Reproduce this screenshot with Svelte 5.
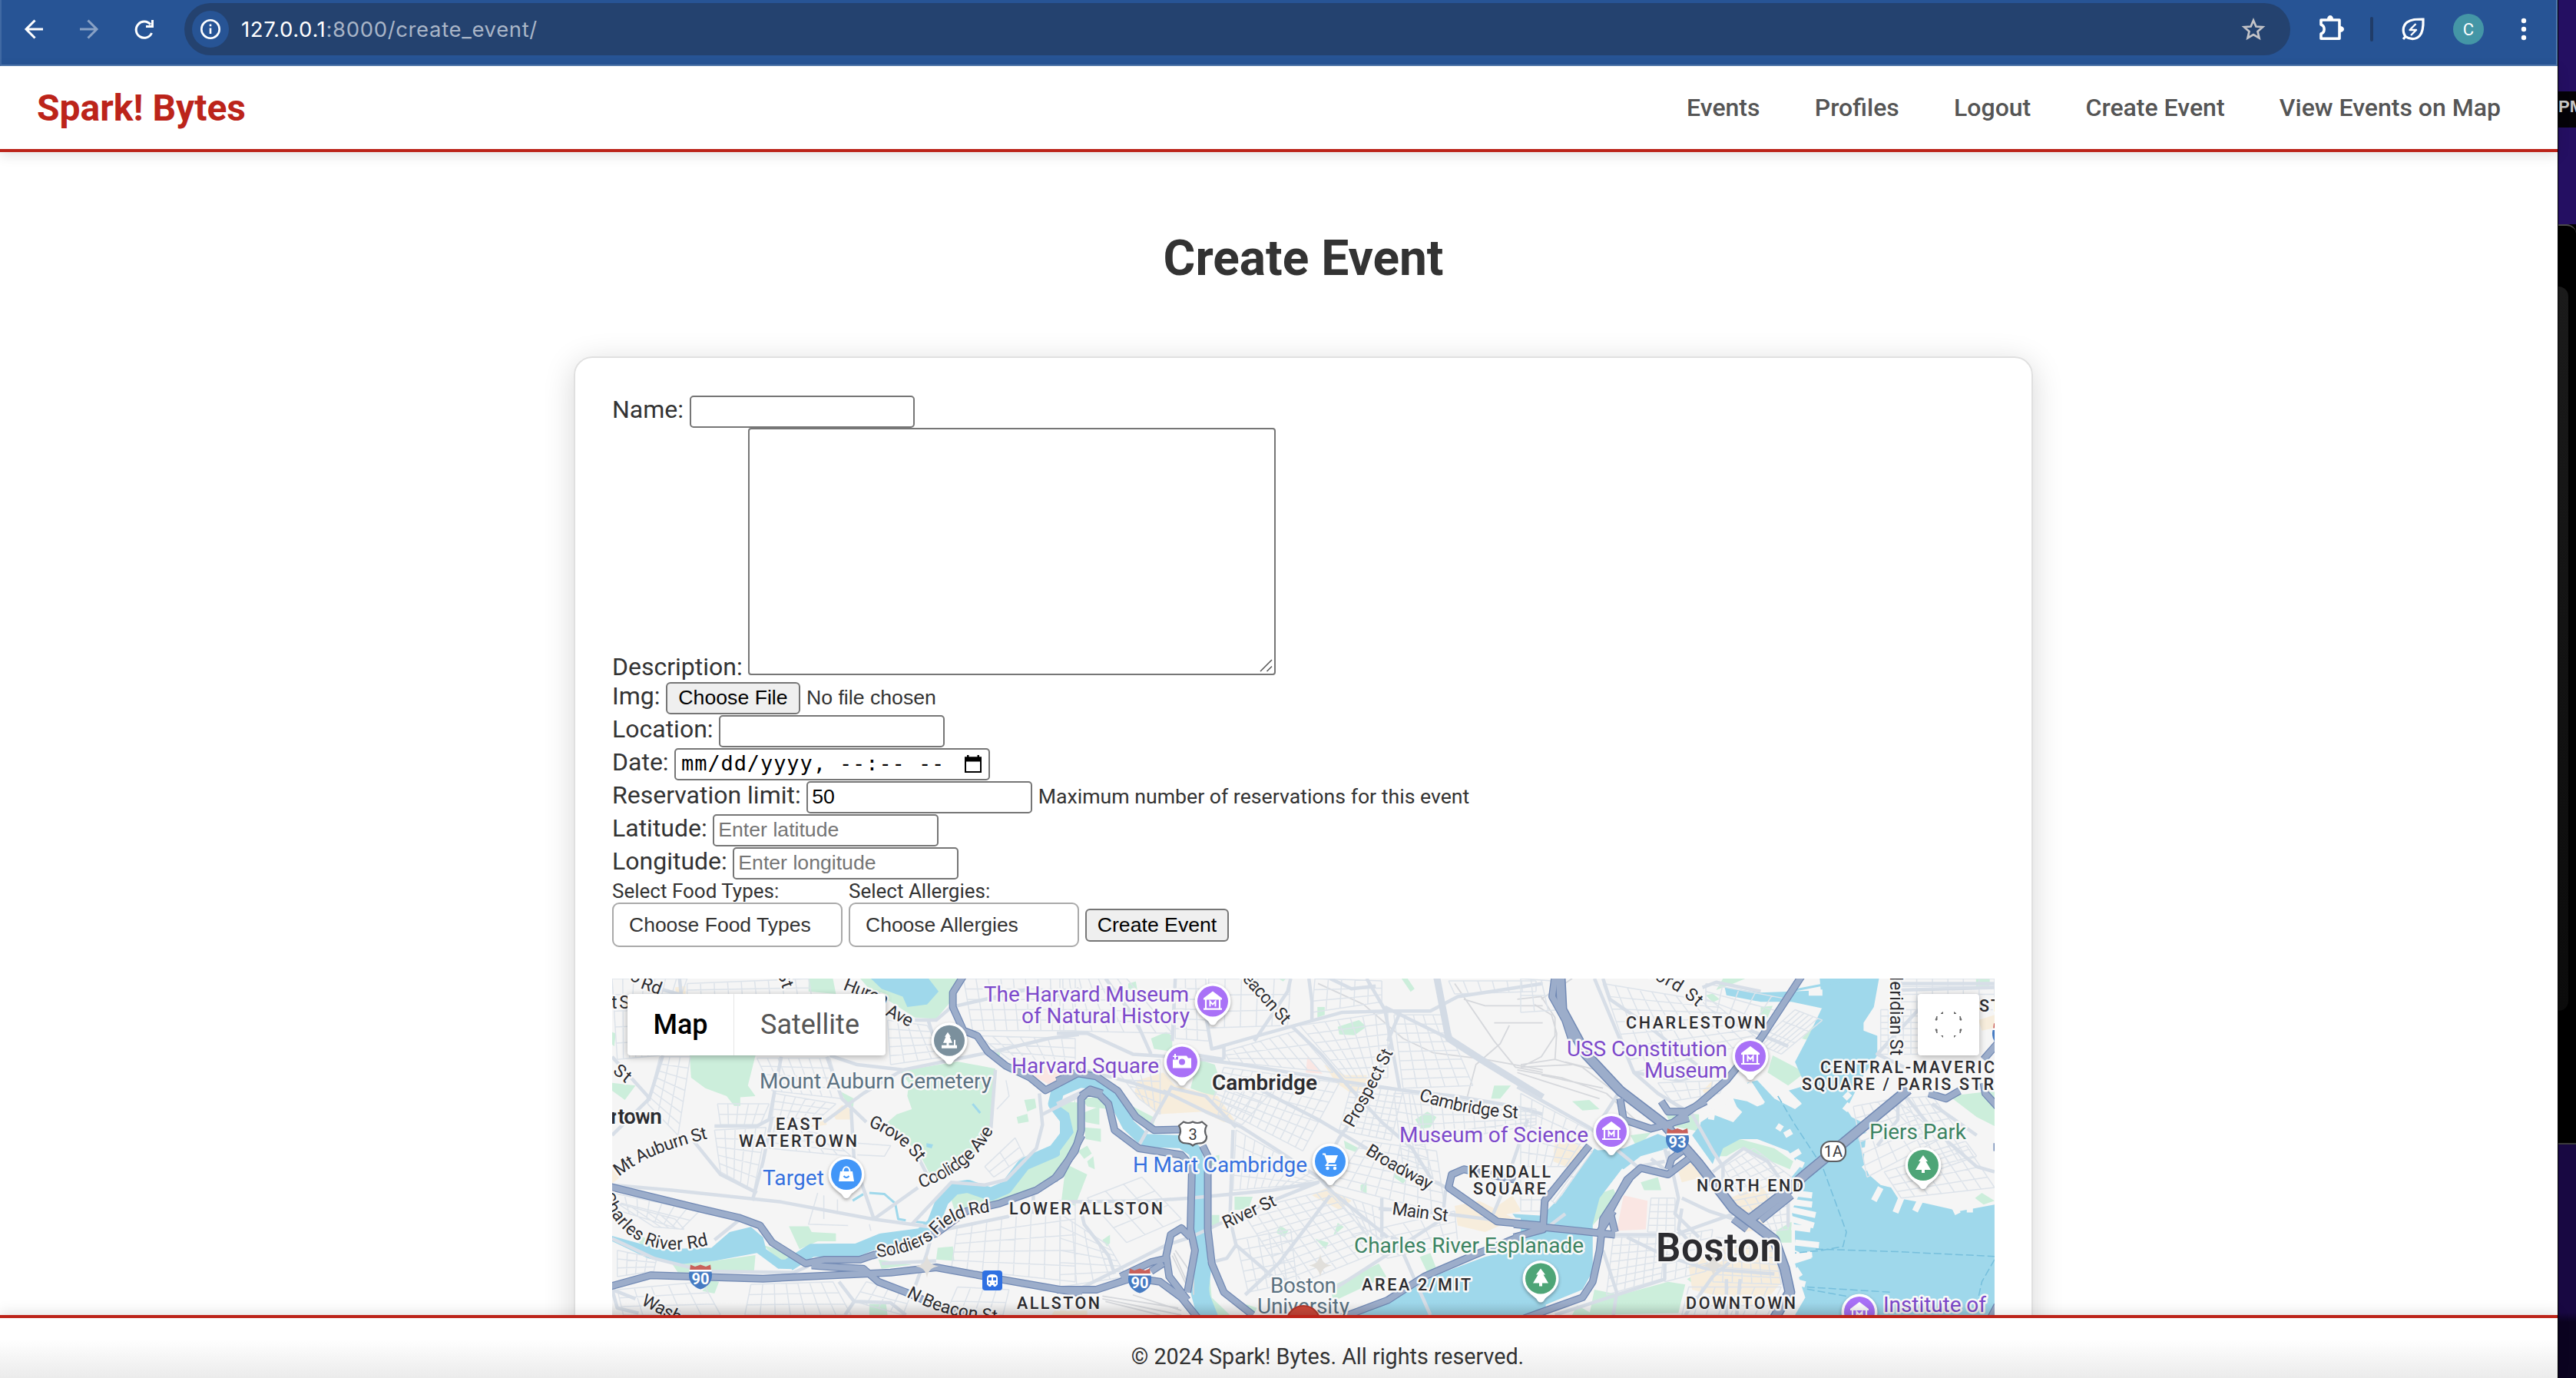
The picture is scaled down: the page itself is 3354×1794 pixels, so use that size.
<script>
  // Street network, drawn per map sheet; each sheet has its own coordinate scale.
  function grid(x0, y0, x1, y1, x2, y2, x3, y3, n, m) {
    const f = (v) => Math.round(v);
    const mix = (a, b, t) => f(a + (b - a) * t);
    let d = '';
    for (let i = 0; i <= n; i++) {
      const t = i / n;
      d += `M${mix(x0, x1, t)},${mix(y0, y1, t)}L${mix(x3, x2, t)},${mix(y3, y2, t)}`;
    }
    for (let j = 0; j <= m; j++) {
      const t = j / m;
      d += `M${mix(x0, x3, t)},${mix(y0, y3, t)}L${mix(x1, x2, t)},${mix(y1, y2, t)}`;
    }
    return d;
  }

  const sheets = [
    {
      move: 'translate(780 1260) scale(.3954 .3406)',
      park: 'M690,41L770,41L780,100L690,90ZM860,41L1190,41L1165,120L1110,195L1040,190L960,130L900,95ZM298,335L515,335L490,450L515,490L465,495L465,528L445,528L420,490L350,460L303,420ZM43,440L120,450L85,505L43,470ZM40,245L55,250L50,300L40,290ZM1020,440L990,395L1180,358L1305,385L1290,600L1230,720L1090,790L1050,700L940,600L980,560L1030,540L1015,490ZM790,470L840,500L835,545ZM1568,500L1568,680L1500,790L1400,860L1290,900L1170,925L1150,850L1220,820L1290,880L1340,860L1420,750L1520,700ZM1400,505L1435,500L1440,535L1410,550ZM1375,570L1410,558L1415,588L1380,595ZM625,988L690,988L700,1010L780,1015L780,1045L720,1045L660,1075ZM240,1130L380,1120L515,1098L510,1165L260,1165ZM370,1195L395,1200L380,1245L340,1235ZM540,1060L600,1080L660,1115L600,1125ZM1115,1070L1165,1065L1170,1120L1110,1115ZM920,1115L1030,1135L930,1150ZM890,1285L945,1285L950,1327L890,1327ZM1530,870L1568,800L1568,900L1525,890ZM1270,330L1320,320L1320,345ZM85,1000L130,1020L200,1060L160,1080Z',
      shop: 'M770,560L800,525L830,540L828,580L780,580ZM43,770L80,790L43,825ZM250,75L285,70L285,105L255,105ZM690,610L740,570L750,600ZM1490,1327L1500,1310L1568,1320V1327Z',
      rose: 'M1400,395L1480,375L1540,410L1480,445Z',
      water: 'M895,41L1085,41L1118,90L1080,140L1015,150L1000,110L930,80ZM43,1025L200,1075L370,1070L400,1040L430,1010L500,990L540,1030L550,1075L600,1115L665,1115L640,1152L590,1150L520,1090L380,1120L250,1135L160,1110L43,1045ZM1078,670L1100,675L1095,690L1078,685Z',
      river: 'M625,1135L700,1080L850,1078L930,1040L1060,1020L1100,980L1130,890L1170,843L1215,835L1290,865L1340,840L1400,750L1500,700L1540,640L1540,580L1500,520L1510,470L1590,430',
      creek: 'M835,890L870,865M890,860L940,865L975,900L985,960L1010,965M1040,970L1075,975M1230,520L1255,555',
      piers: '', ferry: '', rail: '',
      minor:
        grid(43, 41, 290, 41, 200, 335, 60, 350, 7, 5) + grid(290, 60, 690, 41, 700, 110, 290, 110, 9, 2) +
        grid(200, 340, 300, 340, 260, 640, 160, 520, 3, 7) + grid(520, 345, 760, 345, 800, 500, 570, 470, 7, 4) +
        grid(390, 520, 560, 520, 530, 600, 400, 600, 5, 2) + grid(380, 620, 550, 610, 510, 850, 400, 780, 5, 5) +
        grid(580, 480, 780, 520, 720, 580, 570, 570, 6, 3) + grid(560, 690, 830, 720, 750, 640, 580, 600, 6, 4) +
        grid(43, 860, 330, 930, 270, 1000, 70, 930, 7, 2) + grid(60, 900, 250, 960, 280, 1000, 180, 990, 4, 1) +
        grid(950, 200, 1080, 220, 1140, 340, 960, 370, 4, 5) + grid(1200, 41, 1568, 41, 1568, 240, 1230, 240, 9, 5) +
        grid(1250, 260, 1568, 270, 1568, 380, 1350, 350, 7, 3) + grid(60, 1080, 190, 1110, 180, 1160, 60, 1180, 4, 3) +
        grid(60, 1230, 340, 1200, 400, 1327, 80, 1327, 5, 3) + grid(500, 1210, 770, 1200, 830, 1327, 480, 1327, 7, 3) +
        grid(880, 1200, 1030, 1240, 1000, 1327, 840, 1275, 4, 2) + grid(1180, 990, 1568, 900, 1568, 1200, 1160, 1150, 8, 5) +
        grid(1180, 1220, 1350, 1230, 1330, 1327, 1140, 1327, 4, 2) + grid(1370, 650, 1400, 720, 1300, 800, 1270, 760, 2, 2) +
        'M720,860L690,980L820,985M740,870V960M785,885V940M890,980L895,1005M1340,430L1350,490L1310,540M850,670L960,680L940,720L850,715',
      main: 'M380,605L520,605L560,580L600,340M43,640L165,500L210,335M43,340L160,490L165,510M43,830L240,850L600,895L900,960L1090,990M310,660L400,790L520,860M570,570L540,740L505,890M750,340L800,500L880,590M740,590L870,480L1000,390L1300,320L1480,270L1580,255M1085,205L1100,260L1140,350M760,335L850,370L1000,390M830,540L840,740L905,960L1050,840M1030,980L1160,820L1270,830L1340,810L1440,690L1460,600L1450,480M1460,560L1580,490M1040,200L1110,200L1160,150L1310,110L1420,80M1305,390L1290,620M1100,1000L1080,1090L1040,1220M1140,1000L1350,950M43,1035L180,1110L350,1160L640,1165L690,1140M790,1200L840,1275L960,1280L1010,1327M43,1230L60,1300L130,1320M43,1230L120,1265M380,1040L460,965M1040,700L1080,790M840,1275L810,1327M200,80L290,110M265,41L270,100M1430,870L1430,940M930,1130L1110,1120M1450,130L1580,80',
      hwy: 'M30,835L330,920L460,955L530,985L570,1050L680,1130L740,1116L860,1115L910,1095M30,1220L170,1175L540,1188L960,1165L1110,1145L1320,1190L1590,1245M700,1138L790,1145L870,1150L920,1200L1010,1240L1110,1290L1240,1327M1200,30L1165,95L1165,150L1200,240L1245,260L1280,320L1340,375L1420,420L1470,468L1590,395M900,1100L1000,1062L1110,1015L1210,930L1320,900L1440,850L1520,790L1590,640',
      wide: ''
    },
    {
      move: 'translate(1380 1260) scale(.3954 .3406)',
      park: 'M300,270L350,245L370,260L370,320L310,310ZM455,350L510,370L530,440L510,495L430,460ZM915,225L985,200L1010,225L970,258L920,255ZM848,150H872V180L848,190ZM225,60L250,52L255,85L225,80ZM1125,41H1145L1168,80L1155,92ZM0,510L60,515L65,620L50,700L0,790ZM75,555L130,530L130,600L85,590ZM80,610L135,615L135,665L85,655ZM70,500L150,490L160,540L90,530ZM60,700L90,680L105,710L80,730ZM20,750L90,790L50,910L5,890ZM90,740L110,720L115,770L95,760ZM240,530L315,575L305,610L270,590ZM575,875H635L620,925H575ZM1170,580L1210,550L1240,570L1220,610L1190,615ZM1420,500L1430,450L1485,450L1450,500ZM935,660L985,690L975,705L940,690ZM890,1220L1050,1130L1075,1180L900,1275ZM1185,1105L1220,1090L1240,1150L1210,1165ZM490,1140L500,1260L560,1327H505L480,1260ZM725,985L752,1005L740,1030L712,1012ZM840,1035L885,1050L875,1075ZM915,975L935,990L900,1025ZM140,1040L165,1020V1052L155,1065ZM500,945H525V980L500,1000ZM490,725L525,715V740L495,760ZM990,830L1010,820V865L990,850ZM1100,780L1140,810L1130,825L1100,800ZM610,1285L650,1300L640,1320ZM720,41H745L735,52Z',
      shop: 'M245,480L255,430L340,400L380,450L480,480L520,490L580,590L540,590L470,550L320,560ZM870,370L940,410L1010,410L1010,455L960,480L910,440ZM830,870L880,840L960,890L920,925ZM1300,910L1380,890L1500,960L1400,1010L1310,985ZM1430,920L1490,870L1520,930L1440,950ZM0,1310H90V1327H0Z',
      rose: 'M815,335L865,405L810,400ZM0,400L20,405L0,420Z',
      water: 'M0,530L30,555L45,630L0,700ZM440,1100L500,1130L490,1240L520,1327H450L430,1240ZM935,1327L1100,1250L1250,1170L1400,1105L1600,1050V1327ZM1490,940L1600,948V965L1500,955Z',
      river: 'M-10,470L50,432L120,440L180,500L225,600L280,660L400,665L445,700L463,800L463,1040L465,1180L480,1327',
      creek: '', piers: '', ferry: '',
      rail: 'M850,60L1000,140L1130,270L1230,325L1400,350L1590,390M1300,60L1430,280L1500,380L1590,400M1340,500L1370,370L1450,290L1480,220M1330,120L1400,145L1590,145M1430,210H1590M140,1265L400,1327M140,1255L390,1300M150,1275L330,1327M240,1250L400,1310M380,1080L440,1180L440,1250M370,1100L420,1220M375,1090L430,1230',
      minor:
        grid(0, 41, 220, 41, 370, 250, 0, 240, 7, 5) + grid(380, 41, 480, 41, 490, 280, 380, 270, 3, 6) +
        grid(490, 41, 760, 41, 750, 220, 490, 230, 5, 3) + grid(540, 320, 780, 240, 900, 400, 560, 360, 8, 3) +
        grid(540, 380, 920, 440, 800, 700, 500, 520, 12, 7) + grid(960, 450, 1130, 470, 1090, 660, 920, 620, 7, 8) +
        grid(790, 220, 1080, 170, 1080, 420, 940, 420, 7, 6) + grid(1100, 180, 1260, 180, 1360, 450, 1130, 460, 5, 8) +
        grid(1150, 480, 1568, 540, 1568, 600, 1170, 680, 12, 5) + grid(1000, 660, 1240, 700, 1270, 940, 900, 830, 8, 6) +
        grid(580, 620, 860, 800, 780, 830, 570, 850, 9, 4) + grid(900, 860, 1060, 920, 1060, 1080, 1000, 1010, 5, 4) +
        grid(600, 930, 880, 850, 1060, 1080, 760, 1220, 8, 10) + grid(580, 1040, 760, 1000, 780, 1200, 620, 1240, 5, 5) +
        grid(960, 1020, 1300, 930, 1310, 1050, 1080, 1110, 6, 3) + grid(0, 940, 160, 1060, 220, 1180, 0, 1220, 4, 6) +
        grid(90, 880, 270, 800, 400, 960, 220, 1050, 3, 3) + grid(180, 380, 330, 350, 330, 560, 260, 500, 4, 5) +
        grid(1280, 50, 1568, 50, 1568, 90, 1300, 100, 6, 1) + grid(580, 420, 700, 470, 600, 600, 520, 560, 3, 3) +
        grid(1100, 480, 1160, 480, 1230, 810, 1130, 760, 2, 8) + grid(840, 41, 1060, 50, 1060, 130, 830, 170, 5, 3),
      main: 'M765,225L860,330L940,440L1060,590L1160,690L1230,820M430,345L600,370L940,435L1140,470L1300,490L1500,530L1590,560M340,470L480,550L600,610L720,700L850,800L900,860L1080,1030M80,390L240,440L350,480M370,460L480,490L580,610M650,460L850,580L1010,690L1290,850M500,310L650,260L930,170L1090,165L1220,165L1310,110L1590,60M1120,170L1080,280M1010,41L1070,160L1090,280L1120,470M1090,290L1000,520L920,650L850,800M1070,150L1280,270M-10,250L90,250L240,330L370,340L460,335L540,350M380,41L370,280M480,180L500,310L540,300V350M760,41L750,90L640,280M820,41L830,130L830,200M890,41L960,80L1040,70M-10,895L300,890L430,880L700,850L850,820L700,890L560,960L430,1030L350,1060L60,1230M500,1125L550,1110L580,1060L560,960L570,620M610,1250L720,1130L890,870M580,1060L700,1180L760,1200M1050,920L1270,940L1440,965M1060,880V1030M1270,850L1260,960L1060,1110L900,1230M1130,1090L1160,1170L1220,1327M250,700L370,450M250,200L300,330M150,41L260,210M70,930L80,980L160,1100L180,1170M1540,580L1460,850L1420,960M1090,1030L1180,1070M-10,520L80,470',
      hwy: 'M-10,432L50,402L120,415L190,470L250,570L310,620L400,618M470,680L487,720V1000L500,1130L540,1240L635,1327M-20,810L50,700L70,620V500L90,475L130,485L160,520L180,620L260,690L400,715L435,760L430,1000L445,1080L420,1240M70,490L100,465L140,480M-10,1230L120,1230L240,1185L330,1200L400,1260L455,1340M430,1030L400,995L365,1020L350,1100L360,1180L420,1270M200,1180L300,1125L355,1110M300,1160L340,1130M920,1340L1080,1270L1200,1180L1360,1100L1540,1015L1590,990M1590,985L1440,970L1280,840L1290,790L1330,770L1390,785L1500,810',
      wide: 'M1240,30L1280,270L1400,360L1590,495'
    },
    {
      move: 'translate(1980 1260) scale(.4464 .3406)',
      park: 'M820,270L865,205L878,290ZM735,335L830,400L780,450L720,400ZM590,41H655L620,60L570,85ZM540,105L560,98L580,120L560,132ZM700,150L735,145L720,190L700,180ZM150,510L200,505L230,540L180,545ZM420,550L520,560V625L440,605ZM580,720L590,670L640,655L740,690L795,740L785,770L640,690L600,720ZM215,870L270,845L282,875L210,985ZM215,1230L290,1250L430,1200L480,1210L460,1320L200,1327ZM150,1327L165,1290L215,1327ZM1250,490L1382,470V605L1330,570ZM350,820L400,800L410,850L360,850ZM745,1005L790,970V1050H745ZM1328,41H1368V80H1328ZM485,1190L510,1170L525,1190L510,1215ZM860,1327L900,1300L920,1327ZM1325,1327L1382,1310V1327ZM1325,880L1345,860L1382,890L1350,905ZM320,640L380,630L340,690Z',
      shop: 'M100,640L190,690L150,770L95,740ZM610,880L700,830L740,900L700,1000L650,1010ZM560,1060L740,1060L760,1200L700,1300L560,1250L500,1230L490,1140ZM460,780L500,740L530,800L470,820ZM1335,200L1382,180V230L1345,240ZM530,470L560,430L550,500Z',
      rose: 'M300,870L370,890L365,1000L280,1005Z',
      water: 'M872,41H1045L1030,150L1000,210V240L1040,260V335L1000,410L950,540L965,570L1010,600L1000,740L1015,790L1050,830L1080,840L1100,880L1180,900L1280,930L1382,905V1327H800L830,1260L815,1200L800,1130L850,1110L800,1080L800,1000L790,930L825,830L790,800L815,760L780,700L740,680L690,655L640,655L590,690L575,740L560,700L520,630L525,590L560,560L620,590L640,560L620,500L660,510L690,530L710,520L660,440L690,430L740,500L800,540L820,520L780,470L830,450L800,360L840,260L880,150ZM595,75L700,95L890,85L880,155L790,130L700,130L600,105ZM0,945L60,950L120,870L215,690L300,760L230,880L210,980V1160L180,1230L0,1327ZM200,700L300,690L400,635L430,650V690L350,720L300,770ZM500,640L530,590L590,640L560,750Z',
      river: '', creek: 'M780,90L940,50',
      piers: 'M1050,840L1030,890M1110,880L1093,935M1165,890L1150,930M1260,900L1275,940M1310,900V935M790,860L850,870M790,895L850,905M790,925L860,945M790,960L855,985M790,990L845,1000M800,1050L870,1060M810,1100L850,1095M800,1150L815,1180M800,1200L830,1210M665,440L705,520M770,470L812,525M560,540L555,580M600,510L640,560M1045,590L1000,620M1020,640L985,650M1030,690L995,700M960,480L945,500M960,520L945,545M800,740L825,755M790,720L815,700M880,95H840M1020,190V240M770,640L790,625M750,620L760,600M1030,740L1000,770',
      ferry: 'M750,490L800,600L880,760L950,1010L940,1065L880,1080L800,1090M860,1075L1100,1085L1382,1103M1382,1115L1345,1200L1335,1260M835,1220L1080,1240M835,1228L950,1255',
      rail: 'M-10,390L120,420L250,480L350,600M0,370L100,350L180,380L270,470M-10,400L60,430L230,500M100,350L105,250L90,180L40,140M130,360L250,400L300,490M0,380L150,370M60,410L240,460M-10,120L60,110L100,190V260L60,340L0,380M150,41L60,120',
      minor:
        grid(0, 41, 90, 50, 120, 160, 0, 170, 3, 2) + grid(240, 60, 560, 130, 700, 280, 330, 400, 9, 7) +
        grid(540, 60, 780, 120, 700, 260, 540, 150, 5, 3) + grid(690, 290, 800, 160, 880, 200, 760, 330, 3, 6) +
        grid(400, 440, 600, 430, 580, 480, 440, 510, 5, 2) + grid(0, 480, 200, 620, 130, 760, 0, 760, 6, 5) +
        grid(0, 800, 70, 800, 60, 930, 0, 930, 2, 3) + grid(1110, 41, 1382, 41, 1382, 160, 1110, 160, 6, 4) +
        grid(1050, 160, 1160, 160, 1160, 330, 1050, 330, 5, 7) + grid(970, 530, 1090, 500, 1230, 650, 1010, 800, 5, 6) +
        grid(1100, 500, 1200, 490, 1330, 720, 1200, 780, 5, 8) + grid(1060, 780, 1300, 680, 1382, 840, 1110, 880, 7, 4) +
        grid(590, 760, 680, 690, 790, 800, 640, 870, 5, 5) + grid(620, 890, 780, 850, 780, 1000, 700, 1010, 5, 5) +
        grid(380, 880, 450, 880, 450, 1010, 370, 1010, 3, 5) + grid(270, 1030, 420, 1030, 410, 1190, 250, 1250, 6, 7) +
        grid(430, 1030, 560, 1000, 540, 1160, 420, 1200, 4, 5) + grid(570, 1030, 740, 1060, 760, 1210, 560, 1200, 7, 6) +
        grid(490, 1220, 760, 1220, 720, 1327, 470, 1327, 7, 3) + grid(80, 880, 180, 700, 210, 700, 100, 900, 2, 3),
      main: 'M215,41L330,400L400,480L500,560L560,700L590,760V860M-10,455L200,610L340,760L420,740M290,470L240,570M530,75L570,55L700,90M240,41L260,120L360,210L560,420M600,200L780,300M430,700L460,880L450,940L520,1030M270,1020L450,1020L600,950L640,930M470,880L550,930L620,960M560,780L650,690L720,740L780,850V990M600,1020L650,1080L560,1180L480,1327M310,1030L420,1100L540,1150L740,1170M100,1327L420,1190V1110M600,1190V1327M640,1190L630,1327M1080,520L1110,470L1190,600L1330,760L1382,780M1110,60H1382M1110,85L1382,75M1160,160L1040,330L1120,380M1100,500V580L1040,680M1200,520L1330,640M330,400L460,430L560,400M380,730L440,790L420,690M130,940L60,1010M1200,230L1160,330M240,1080L280,1240L270,1327M470,920L460,1000L500,1060',
      hwy: 'M100,30L92,110L130,200L150,280M820,30L700,270L600,430L520,520L430,605M200,680L70,890L65,1000L-20,1030M-20,980L130,1000L275,1020M275,1010L260,930L310,810L350,765L430,790L490,730M350,765L320,800L240,960L230,1080L210,1200L180,1260L10,1340M230,1010L270,930M290,500L300,580L380,615L490,575M410,510L430,550L480,550L540,510M430,770L440,730L470,700M700,965L790,870M1190,480L1240,500L1280,470M1390,530L1355,480L1350,440M1390,290L1350,350M1390,1290L1370,1340M1390,670V700M620,960L660,1000',
      wide: ''
    }
  ];

  const trunk = 'M115,30L120,160L190,330L290,470L420,600L520,750L620,920L740,1040L770,1150L785,1240L740,1340M670,960L770,860L830,790L1130,465';

  const purple = '#7d4acb', blue = '#3671df', green = '#3c8463', slate = '#5b7282';
  const places = [
    ['The Harvard Museum', 1281, 1303.5, 267, 28, purple], ['of Natural History', 1330, 1331.5, 219, 28, purple],
    ['Harvard Square', 1317, 1397, 192, 28, purple], ['Museum of Science', 1822, 1486.5, 246, 28, purple],
    ['USS Constitution', 2040, 1375, 209, 28, purple], ['Museum', 2141, 1402.5, 108, 28, purple],
    ['Institute of', 2452, 1707.5, 134, 28, purple], ['Mount Auburn Cemetery', 989, 1416.5, 302, 28, slate],
    ['Boston', 1654, 1682.5, 86, 28, slate], ['University', 1637, 1710, 120, 28, slate],
    ['Target', 993, 1542.5, 80, 28, blue], ['H Mart Cambridge', 1475, 1525.5, 227, 28, blue],
    ['Charles River Esplanade', 1763, 1630.5, 299, 28, green], ['Piers Park', 2434, 1483, 126, 28, green]
  ];
  const towns = [
    ['Cambridge', 1578, 1419, 137, 28], ['rtown', 795, 1462.5, 67, 28], ['Boston', 2156, 1642, 164, 51],
    ['EAST', 1010, 1470.5, 60, 21.5], ['WATERTOWN', 962, 1492.5, 154, 21.5], ['LOWER ALLSTON', 1314, 1581, 200, 21.5],
    ['ALLSTON', 1324, 1703.5, 108, 21.5], ['KENDALL', 1912, 1533, 107, 21.5], ['SQUARE', 1918, 1555, 95, 21.5],
    ['AREA 2/MIT', 1773, 1679.5, 142, 21.5], ['CHARLESTOWN', 2117, 1339, 182, 21.5], ['CENTRAL-MAVERIC', 2370, 1397, 227, 21.5],
    ['SQUARE / PARIS STR', 2346, 1418.5, 250, 21.5], ['NORTH END', 2209, 1550.5, 139, 21.5],
    ['DOWNTOWN', 2195, 1703.5, 143, 21.5], ['ST', 2577, 1317, 28, 21.5]
  ];
  const streets = [
    ['Mt Auburn St', 'M806,1532Q842,1501 923,1482', 127], ['Grove St', 'M1130,1466Q1172,1482 1196,1515', 81],
    ['Coolidge Ave', 'M1199,1547Q1270,1522 1295,1468', 124], ['Charles River Rd', 'M783,1556Q822,1652 932,1618', 172],
    ['Soldiers Field Rd', 'M1142,1637Q1200,1630 1222,1606T1290,1578', 162], ['N Beacon St', 'M1180,1688Q1232,1718 1310,1722', 124],
    ['Wash', 'M834,1698L885,1724', 55], ['Huron', 'M1097,1288L1156,1311', 60], ['Ave', 'M1152,1321L1190,1340', 36],
    ['Rd', 'M833,1286L863,1297', 27], ['o', 'M819,1276L833,1281', 12], ['t S', 'M796,1313L822,1313', 24],
    ['St', 'M797,1396L818,1413', 23], ['St', 'M1012,1267L1020,1290', 22],
    ['Beacon St', 'M1608,1265L1680,1345', 94], ['Prospect St', 'M1762,1469Q1790,1420 1816,1366', 112],
    ['Broadway', 'M1777,1502Q1818,1528 1862,1550', 96], ['Cambridge St', 'M1847,1432Q1905,1452 1978,1456', 132],
    ['River St', 'M1596,1600L1667,1567', 74], ['Main St', 'M1812,1581L1890,1591', 73],
    ['ford St', 'M2145,1272Q2184,1286 2218,1319', 76], ['Meridian St', 'M2461,1257V1380', 117]
  ];
  const pins = [
    [1579, 1303.6, 'museum'], [1539, 1382.6, 'camera'], [1732, 1512, 'cart'], [1236, 1354.7, 'grave'], [1102, 1529, 'bag'],
    [2279, 1375, 'museum'], [2098, 1473, 'museum'], [2504, 1517, 'tree'], [2006, 1664.6, 'tree'], [2421, 1708, 'museum']
  ];
  const pinFill = { museum: '#a971f7', camera: '#a971f7', cart: '#4296f8', bag: '#4296f8', grave: '#7b909d', tree: '#4ea577' };
  const shields = [[912, 1662.5, '90'], [1484, 1667.5, '90'], [2184, 1485, '93'], [2609, 1348, '']];
  const stars = [[1207, 1648.5], [1719, 1647.5], [2231, 1647.5]];
  const nav = ['Events', 'Profiles', 'Logout', 'Create Event', 'View Events on Map'];
</script>

<div class="screen">
  <div class="browser">
    <div class="toolbar">
      <svg class="nav-icons" viewBox="0 0 240 84" fill="none" stroke="#fff" stroke-width="3">
        <path d="M56 38H34M45.5 26.5L34 38l11.500 11.500" />
        <path opacity=".45" d="M104 38h22M114.500 26.500L126 38l-11.500 11.500" />
        <path d="M197.500 43a10.600 10.600 0 1 1-1.500-11" />
        <path fill="#fff" stroke="none" d="M200 26v10h-10v-3h7v-7z" />
      </svg>
      <div class="omnibox">
        <span class="info">
          <svg viewBox="0 0 48 48" fill="none" stroke="#fff"><circle cx="24" cy="24" r="11.700" stroke-width="2.600" /><path stroke-width="2.600" d="M24 22.500V30M24 17.600V20.200" /></svg>
        </span>
        <span class="url"><b>127.0.0.1</b>:8000/create_event/</span>
        <svg class="star" viewBox="0 0 32 32" fill="none" stroke="#c4c4c8" stroke-width="2.700"><path d="M16 4.500l3.400 8 8.700.7-6.600 5.700 2 8.500L16 23l-7.500 4.400 2-8.500-6.600-5.700 8.700-.7z" /></svg>
      </div>
      <svg class="actions" viewBox="3000 0 330 84" fill="none" stroke="#fff" stroke-width="3.600">
        <path stroke-linejoin="round" d="M3022 26h24v24.200h-24v-6.200c5.500-2 5.500-10 0-12z" />
        <path stroke="none" fill="#fff" d="M3030 25a4 5 0 0 1 8 0zM3047 34a5 4 0 0 1 0 8z" />
        <path stroke="#203c68" stroke-width="4" stroke-linecap="round" d="M3088 24v28" />
        <path stroke-width="3.200" d="M3129 51l3-3.500c-4.500-6-3.500-14 2-18.500c5.500-4.200 13-4 21-4c.3 8 0 16.500-4.500 21.500c-5.500 5.800-13 5-18.500 1" />
        <path stroke-width="2.400" stroke-linejoin="round" d="M3145.500 31l-8 8h8.500l-7 7" />
        <circle cx="3214" cy="38" r="20" fill="#4496a6" stroke="none" />
        <text x="3214" y="45.500" text-anchor="middle" class="initial">C</text>
        <g fill="#fff" stroke="none"><circle cx="3286" cy="27" r="3.200" /><circle cx="3286" cy="38" r="3.200" /><circle cx="3286" cy="49" r="3.200" /></g>
      </svg>
    </div>

    <header>
      <div class="brand">Spark! Bytes</div>
      <nav>{#each nav as item}<a href="#top">{item}</a>{/each}</nav>
    </header>

    <main>
      <h1>Create Event</h1>
      <section class="card">
        <div class="row"><label for="name">Name:</label><input id="name" /></div>
        <div class="row tall">
          <span class="label">Description:</span>
          <div class="area"><svg viewBox="0 0 20 20" stroke="#555" stroke-width="1.500"><path d="M2 17L17 2M10.500 17L17 10.500" /></svg></div>
        </div>
        <div class="row"><span class="label">Img:</span><button class="file">Choose File</button><span class="nofile">No file chosen</span></div>
        <div class="row"><label for="loc">Location:</label><input id="loc" /></div>
        <div class="row">
          <span class="label">Date:</span>
          <div class="date">
            <span>mm/dd/yyyy, --:-- --</span>
            <svg viewBox="0 0 22 24"><path fill="none" stroke="#000" stroke-width="2" d="M1 3.500h20v18.500H1z" /><path d="M0 2.500h22v6H0zM3 0h2.500v4H3zM16.500 0H19v4h-2.500z" /></svg>
          </div>
        </div>
        <div class="row"><label for="limit">Reservation limit:</label><input id="limit" value="50" /><span class="help">Maximum number of reservations for this event</span></div>
        <div class="row"><label for="lat">Latitude:</label><input id="lat" placeholder="Enter latitude" /></div>
        <div class="row"><label for="lng">Longitude:</label><input id="lng" placeholder="Enter longitude" /></div>
        <div class="pickers">
          <div><span class="small">Select Food Types:</span><div class="picker">Choose Food Types</div></div>
          <div><span class="small">Select Allergies:</span><div class="picker">Choose Allergies</div></div>
          <button class="submit">Create Event</button>
        </div>

        <div class="map">
          <svg class="canvas" viewBox="797 1274 1800 440">
            {#each sheets as s}
              <g transform={s.move}>
                <path class="park" d={s.park} /><path class="shop" d={s.shop} /><path class="rose" d={s.rose} />
                <path class="water" d={s.water} /><path class="line river" d={s.river} /><path class="line creek" d={s.creek} />
                <path class="line pier" d={s.piers} /><path class="line ferry" d={s.ferry} />
                <path class="line rail" d={s.rail} />
              </g>
            {/each}
            {#each sheets as s}
              <g transform={s.move}>
                <path class="line minor" d={s.minor} />
                <path class="line main" d={s.main} /><path class="line wide" d={s.wide} />
              </g>
            {/each}
            {#each sheets as s}<path class="line edge" transform={s.move} d={s.hwy} />{/each}
            <path class="line edge trunk" transform={sheets[2].move} d={trunk} />
            {#each sheets as s}<path class="line hwy" transform={s.move} d={s.hwy} />{/each}
            <path class="line hwy trunk" transform={sheets[2].move} d={trunk} />

            {#each streets as [t, d, w], i}
              <path id="st{i}" {d} fill="none" />
              <text class="street"><textPath href="#st{i}" textLength={w}>{t}</textPath></text>
            {/each}
            {#each towns as [t, x, y, w, size]}
              <text class="town" class:big={size > 22} {x} {y} textLength={w} font-size={size}>{t}</text>
            {/each}
            {#each places as [t, x, y, w, size, color]}
              <text class="place" {x} {y} textLength={w} font-size={size} fill={color}>{t}</text>
            {/each}
            {#each stars as [x, y]}
              <path transform="translate({x} {y})" fill="#e1dfdb" d="M0-15C2-5 5-2 15 0C5 2 2 5 0 15C-2 5-5 2-15 0C-5-2-2-5 0-15Z" />
            {/each}

            {#each shields as [x, y, n]}
              <g transform="translate({x} {y})">
                <path fill="#c9615b" d="M-14-8L-13-16L-7-13.500L0-16L7-13.500L13-16L14-8Z" />
                <path fill="#fff" d="M-14.500-9.500h29v3h-29z" />
                <path fill="#467bc2" d="M-14.500-7h29C17 5 10 13 0 16C-10 13-17 5-14.500-7Z" />
                <text y="9" text-anchor="middle" class="num">{n}</text>
              </g>
            {/each}
            <g transform="translate(1553 1475.500)">
              <path fill="#fff" stroke="#5d5f63" stroke-width="2.200" d="M-12-15Q-6-12 0-15Q6-12 12-15L18-10Q14-3 18 4Q18 13 8 13Q3 13 0 16Q-3 13-8 13Q-18 13-18 4Q-14-3-18-10Z" />
              <text y="8" text-anchor="middle" class="route">3</text>
            </g>
            <g transform="translate(2387 1499)">
              <rect x="-16" y="-13" width="32" height="26" rx="12" fill="#fff" stroke="#5d5f63" stroke-width="2.200" />
              <text y="6.500" text-anchor="middle" class="route">1A</text>
            </g>
            <g transform="translate(1292 1667)">
              <rect x="-13" y="-13" width="26" height="26" rx="4" fill="#2f70e2" />
              <path fill="#fff" fill-rule="evenodd" d="M-7-3Q-7-8 0-8Q7-8 7-3V5L4 8H2L1 6H-1L-2 8H-4L-7 5ZM-5-4V0H-1V-4ZM1-4V0H5V-4ZM-5 2.500V4.500H-3V2.500ZM3 2.500V4.500H5V2.500Z" />
            </g>

            {#each pins as [x, y, kind]}
              <g transform="translate({x} {y})">
                <path class="drop" d="M0 31C-3 31-4 29-6 26C-10 22-23.500 15-23.500 0A23.500 23.500 0 0 1 23.500 0C23.500 15 10 22 6 26C4 29 3 31 0 31Z" />
                <circle r="20" fill={pinFill[kind]} />
                {#if kind === 'museum'}
                  <path fill="none" stroke="#fff" stroke-width="2.200" d="M-9-3V9M9-3V9M-12 10H12" />
                  <path fill="#fff" d="M0-13L12-4V-2H-12V-4Z" /><path fill="none" stroke="#fff" stroke-width="2" d="M-3.500 7V0L0 4L3.500 0V7" />
                {:else if kind === 'camera'}
                  <path fill="#fff" fill-rule="evenodd" d="M-12-3H-5V-8H6L8-5H12V8H-12ZM0-4A4 4 0 0 0 0 4A4 4 0 0 0 0-4ZM-12-6.500H-10V-4H-8V-6.500H-5.500V-8H-8V-10.500H-10V-8H-12Z" />
                {:else if kind === 'cart'}
                  <path fill="none" stroke="#fff" stroke-width="2.200" d="M-10-9.500H-7L-3 2L-5 5H8" /><path fill="#fff" d="M-6-8H10L6 2H-3Z" /><circle cx="-3.500" cy="9" r="2.200" fill="#fff" /><circle cx="6" cy="9" r="2.200" fill="#fff" />
                {:else if kind === 'bag'}
                  <path fill="#fff" d="M-8-4H8L10 9H-10Z" /><path fill="none" stroke="#fff" stroke-width="2" d="M-4.500-3C-4.500-12 4.500-12 4.500-3" /><path fill="none" stroke="#4296f8" stroke-width="2" d="M-3.500 2Q0 6 3.500 2" />
                {:else if kind === 'grave'}
                  <path fill="#fff" d="M-2-11L2-5H0.500L4 3H-8L-4.500-5H-6ZM-3.500 3H-.5V7H-3.500ZM-10 6H10V10H-10ZM6-1H8V6H6Z" />
                {:else}
                  <path fill="#fff" d="M0-13L6-5H3.500L10 6H2V10H-2V6H-10L-3.500-5H-6Z" />
                {/if}
              </g>
            {/each}
            <circle cx="1697" cy="1722" r="22" fill="#d24a3b" stroke="#b5382c" stroke-width="2" />
          </svg>
          <div class="types"><span class="on">Map</span><span>Satellite</span></div>
          <div class="full"><svg viewBox="0 0 36 36" fill="#666"><path d="M8 3L11 1V4H8ZM25 4V1L28 3V4ZM8 32H11V35ZM25 35V32H28Z" /><path d="M1 12L3 7V12ZM33 12V7L35 12ZM1 24H3V29ZM33 24H35L33 29Z" stroke="#666" stroke-width="1" /></svg></div>
          <div class="fade"></div>
        </div>
      </section>
    </main>

    <footer>© 2024 Spark! Bytes. All rights reserved.</footer>
  </div>

  <aside>
    <div class="wall"></div>
    <div class="clock">PM</div>
    <div class="wall lower"></div>
    <div class="device"><div class="panel"></div></div>
    <div class="wall dark"></div>
  </aside>
</div>

<style>
  :global(body) { margin: 0; background: #fff; overflow: hidden; }
  * { box-sizing: border-box; }
  .screen { display: flex; width: 3354px; height: 1794px; overflow: hidden; font-family: Roboto, sans-serif; color: #333; }
  .browser { width: 3330px; height: 1794px; display: flex; flex-direction: column; background: #fff; }
  .toolbar { display: flex; flex: none; height: 86px; background: #275495; border-bottom: 2px solid #5078ae; border-right: 2px solid #5078ae; border-left: 2px solid #4069a3; }
  .nav-icons { width: 240px; height: 84px; margin-left: -2px; flex: none; }
  .omnibox { display: flex; align-items: center; width: 2742px; height: 68px; margin-top: 4px; padding: 0 32px 0 10px; border-radius: 34px; background: #24426f; flex: none; }
  .info { width: 48px; height: 48px; border-radius: 24px; background: #275495; }
  .info svg { display: block; }
  .url { flex: 1; margin-left: 16px; font: 27.500px Inter, sans-serif; letter-spacing: .65px; color: #a9b5c7; white-space: nowrap; }
  .url b { font-weight: 400; color: #fff; }
  .star { width: 32px; height: 32px; }
  .actions { width: 330px; height: 84px; margin-left: 18px; flex: none; }
  .initial { font: 22px Roboto, sans-serif; fill: #fff; stroke: none; }

  header { display: flex; flex: none; align-items: center; justify-content: space-between; height: 112px; padding: 0 74px 0 48px; border-bottom: 4px solid #bc241a; box-shadow: 0 4px 16px rgba(0, 0, 0, .12); position: relative; z-index: 1; background: #fff; }
  .brand { font-size: 48px; font-weight: 700; color: #bc241a; }
  nav { display: flex; gap: 71.300px; }
  nav a { color: #555; font-size: 32px; font-weight: 500; text-decoration: none; }

  main { flex: 1; min-height: 0; overflow: hidden; }
  h1 { margin: 101px 0 90px 64px; font-size: 64px; line-height: 75px; text-align: center; font-weight: 700; color: #333; }
  .card { width: 1900px; height: 1500px; margin-left: 747px; padding: 48px; border: 2px solid #e0e0e0; border-radius: 24px; box-shadow: 0 8px 40px rgba(0, 0, 0, .16); }
  .row { display: flex; align-items: baseline; height: 43px; }
  label, .label { font-size: 32px; line-height: 38px; margin-right: 7.500px; white-space: nowrap; color: #333; }
  input, .date { width: 293.500px; height: 42px; padding: 0 5px; border: 2px solid #767676; border-radius: 5px; background: #fff; font: 26.67px "Liberation Sans", Arial, sans-serif; color: #000; margin: 0; outline: none; }
  input::placeholder { color: #757575; opacity: 1; }
  .tall { height: 330px; align-items: flex-start; }
  .tall .label { align-self: flex-end; }
  .area { display: flex; align-items: flex-end; justify-content: flex-end; width: 687px; height: 322px; border: 2px solid #767676; border-radius: 4px; }
  .area svg { width: 20px; height: 20px; }
  button { height: 42px; padding: 0; border: 2px solid #767676; border-radius: 6px; background: #efefef; color: #000; font: 26.67px "Liberation Sans", Arial, sans-serif; }
  .file { width: 175px; }
  .nofile { margin-left: 8px; font: 26.67px "Liberation Sans", Arial, sans-serif; }
  .date { display: flex; align-items: baseline; justify-content: space-between; width: 411px; padding: 0 9px 0 7px; line-height: 38px; }
  .date span { font: 27px/36px "DejaVu Sans Mono", monospace; letter-spacing: .9px; white-space: pre; }
  .date svg { width: 22px; height: 24px; align-self: center; }
  .help { margin-left: 8px; font-size: 26.670px; }
  .pickers { display: flex; gap: 8px; height: 88px; }
  .small { display: block; font-size: 26px; line-height: 30px; white-space: nowrap; }
  .picker { width: 300px; height: 58px; padding-left: 20px; border: 2px solid #aaa; border-radius: 9px; font: 26.500px/54px "Liberation Sans", Arial, sans-serif; }
  .submit { width: 187px; margin-top: 38px; height: 43px; }

  .map { position: relative; width: 1800px; height: 440px; margin-top: 41px; overflow: hidden; background: #f5f5f5; }
  .canvas { display: block; width: 1800px; height: 440px; }
  .line { fill: none; vector-effect: non-scaling-stroke; stroke-linejoin: round; }
  .park { fill: #cceedb; }
  .shop { fill: #f7eddc; }
  .rose { fill: #fae6e3; }
  .water { fill: #9fd8eb; }
  .river { stroke: #9fd8eb; stroke-width: 17px; }
  .creek { stroke: #9fd8eb; stroke-width: 3px; }
  .pier { stroke: #f5f5f5; stroke-width: 8px; }
  .ferry { stroke: #76bfdc; stroke-width: 1.500px; stroke-dasharray: 10 4; }
  .rail { stroke: #d6d8dc; stroke-width: 1.800px; }
  .minor { stroke: #dde3ea; stroke-width: 1.500px; }
  .main { stroke: #d7dee7; stroke-width: 4.500px; }
  .wide { stroke: #d3dbe5; stroke-width: 9px; }
  .edge { stroke: #7189b4; stroke-width: 10px; }
  .hwy { stroke: #9cadca; stroke-width: 7.500px; }
  .edge.trunk { stroke-width: 14px; }
  .hwy.trunk { stroke-width: 11px; }
  text { font-family: Roboto, sans-serif; }
  .street, .town, .place { paint-order: stroke; stroke: #f8f8f8; stroke-width: 5px; stroke-linejoin: round; }
  .street { font-size: 23px; fill: #2c2c30; }
  .town { font-weight: 500; fill: #2c2c30; }
  .town.big { font-weight: 600; }
  .num { font-size: 20px; font-weight: 700; fill: #fff; }
  .route { font-size: 20px; fill: #3a3a3d; }
  .drop { fill: #fff; filter: drop-shadow(0 2px 2px rgba(0, 0, 0, .35)); }
  .types { position: absolute; left: 20px; top: 20px; display: flex; width: 336px; height: 80px; border-radius: 4px; background: #fff; box-shadow: 0 2px 8px rgba(0, 0, 0, .3); font-size: 36px; line-height: 80px; text-align: center; color: #565656; }
  .types span { flex: 1; }
  .types .on { flex: none; width: 139px; font-weight: 500; color: #000; border-right: 1px solid #e6e6e6; }
  .full { position: absolute; left: 1700px; top: 20px; display: flex; align-items: center; justify-content: center; width: 80px; height: 80px; border-radius: 4px; background: #fff; box-shadow: 0 2px 8px rgba(0, 0, 0, .3); }
  .full svg { width: 36px; height: 36px; }
  .fade { position: absolute; left: 0; top: 422px; width: 1800px; height: 16px; background: linear-gradient(rgba(0, 0, 0, 0), rgba(0, 0, 0, .1)); }

  footer { flex: none; height: 82px; padding: 12px 0 0 127px; border-top: 4px solid #bc241a; box-shadow: 0 -4px 16px rgba(0, 0, 0, .1); position: relative; text-align: center; font-size: 28.700px; line-height: 76px; background: linear-gradient(#fff 35%, #ebebeb); color: #333; white-space: nowrap; }

  aside { display: flex; flex-direction: column; width: 24px; height: 1794px; border-left: 1px solid #000; background: #000; overflow: hidden; }
  .wall { height: 119px; background: #240f62; flex: none; }
  .clock { height: 47px; padding-top: 9px; font: 700 22px/22px "Liberation Sans", sans-serif; color: #c9c9c9; background: #050308; flex: none; }
  .wall.lower { height: 126px; }
  .device { height: 1198px; padding: 79px 0 0; background: #000; border-top: 2px solid #4a4a4a; border-bottom: 2px solid #3a3a3a; border-radius: 0 12px 0 0; flex: none; }
  .panel { width: 13px; height: 943px; border-radius: 0 14px 14px 0; background: linear-gradient(#1a1a1a, #0b0b0b); }
  .wall.dark { height: 304px; background: linear-gradient(#180842 0 72%, #0b0320 76%); }
</style>
